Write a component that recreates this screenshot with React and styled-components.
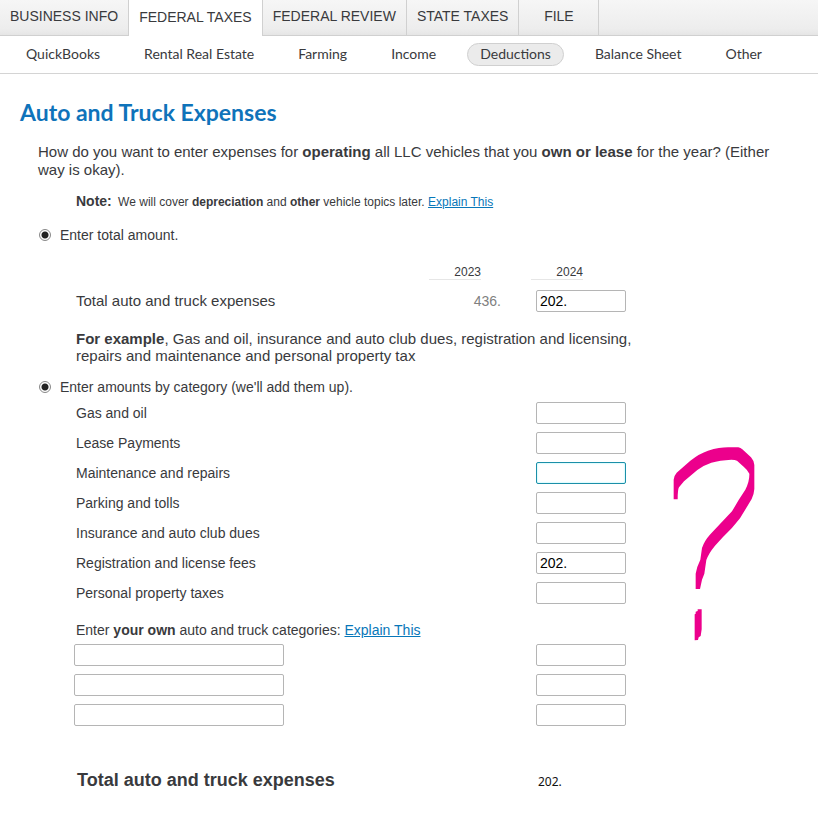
import React, { useState } from "react";
import styled, { createGlobalStyle } from "styled-components";

const GlobalStyle = createGlobalStyle`
  *, *::before, *::after {
    box-sizing: border-box;
  }

  body {
    margin: 0;
    background: #fff;
    color: #393a3d;
    font: 14px/18px "Liberation Sans", Arial, sans-serif;
  }
`;

const Tabs = styled.nav`
  display: flex;
  height: 36px;
  background: linear-gradient(#f6f6f6, #ededed 80%, #e4e4e4);
  box-shadow: inset 0 -1px #d0d0d0;
`;

const Tab = styled.a`
  display: flex;
  justify-content: center;
  min-width: 80px;
  padding: ${(props) => (props.$active ? "8px 10px" : "7px 10px")};
  border-right: 1px solid #d0d0d0;
  background: ${(props) => (props.$active ? "#fff" : "none")};
  color: inherit;
  text-decoration: none;
  white-space: nowrap;
`;

const SubNav = styled.nav`
  display: flex;
  align-items: center;
  gap: 18px;
  height: 38px;
  padding: 0 13px;
  border-bottom: 1px solid #d4d4d4;
`;

const SubNavLink = styled.a`
  padding: 1px 12px 2px;
  border: 1px solid ${(props) => (props.$active ? "#d0d0d0" : "transparent")};
  border-radius: 12px;
  background: ${(props) => (props.$active ? "#ebebeb" : "none")};
  color: inherit;
  font-family: Lato, sans-serif;
  text-decoration: none;
  white-space: nowrap;
`;

const Main = styled.main`
  padding: 24px 20px;
`;

const Title = styled.h1`
  margin: 0;
  color: #0f73ba;
  font: 700 23px/28px Lato, sans-serif;
`;

const Form = styled.form`
  padding: 17px 18px 0;
`;

const Question = styled.p`
  margin: 0;
  font-size: 15px;
`;

const Note = styled.p`
  margin: 13px 0 15px 38px;
  font-size: 12px;
`;

const NoteLabel = styled.strong`
  margin-right: 3px;
  font-size: 14px;
`;

const Link = styled.a`
  color: #0877b9;
`;

const Choice = styled.label`
  display: flex;
  align-items: center;
  gap: 9px;
`;

const Radio = styled.input.attrs({ type: "radio" })`
  appearance: none;
  width: 12px;
  height: 12px;
  margin: 0 0 0 1px;
  border: 1px solid #888;
  border-radius: 50%;

  &:checked {
    background: radial-gradient(circle, #222 3px, #fff 4px);
  }
`;

const Fields = styled.div`
  flex: 0 1 550px;
  max-width: 550px;
`;

const Indent = styled.div`
  display: flex;
  align-items: flex-start;
  padding: 2px 0 0 38px;
`;

const YearTable = styled.table`
  width: 100%;
  margin-top: 20px;
  border-collapse: collapse;

  th,
  td {
    padding: 0;
    font-weight: 400;
    text-align: left;
  }

  label {
    font-size: 15px;
  }
`;

const YearCell = styled.th`
  width: ${(props) => props.$width}px;
  padding-bottom: 10px !important;
`;

const Year = styled.div`
  width: 52px;
  border-bottom: 1px solid #e6e6e6;
  font-size: 12px;
  line-height: 13px;
  text-align: right;
`;

const PriorAmount = styled.div`
  width: 72px;
  color: #808080;
  text-align: right;
`;

const TextInput = styled.input`
  display: block;
  width: ${(props) => props.$width || 90}px;
  height: 22px;
  margin-left: ${(props) => (props.$right ? "auto" : 0)};
  padding: 0 3px;
  border: 1px solid ${(props) => (props.$active ? "#1b8fa8" : "#b5b5b5")};
  border-radius: 2px;
  background: #fff;
  box-shadow: ${(props) => (props.$active ? "inset 0 0 2px #8ef3fa" : "none")};
  color: #000;
  font: inherit;
  outline: none;
`;

const Example = styled.p`
  max-width: 570px;
  margin: 18px -10px 14px 0;
  font-size: 15px;
  line-height: 17px;
`;

const Row = styled.div`
  display: flex;
  align-items: center;
  justify-content: space-between;
  height: 30px;
`;

const OwnText = styled.p`
  margin: 13px 0 1px;
`;

const OwnRow = styled(Row)`
  margin-left: -2px;
`;

const Scribble = styled.svg`
  flex: none;
  width: 82px;
  height: 194px;
  margin: 49px 0 0 47px;
  fill: #ec008c;
`;

const TotalRow = styled.div`
  display: flex;
  align-items: baseline;
  justify-content: space-between;
  max-width: 550px;
  margin: 39px 0 0 38px;
`;

const TotalLabel = styled.h2`
  margin: 0 0 0 1px;
  font-size: 18px;
  line-height: 22px;
`;

const TotalAmount = styled.output`
  width: 88px;
  color: #111;
  font: 12px/18px "Noto Sans", sans-serif;
`;

const tabs = [
  "BUSINESS INFO",
  "FEDERAL TAXES",
  "FEDERAL REVIEW",
  "STATE TAXES",
  "FILE",
];

const sections = [
  "QuickBooks",
  "Rental Real Estate",
  "Farming",
  "Income",
  "Deductions",
  "Balance Sheet",
  "Other",
];

const categories = [
  { id: "gas", label: "Gas and oil" },
  { id: "lease", label: "Lease Payments" },
  { id: "repairs", label: "Maintenance and repairs" },
  { id: "parking", label: "Parking and tolls" },
  { id: "insurance", label: "Insurance and auto club dues" },
  { id: "registration", label: "Registration and license fees", value: "202." },
  { id: "property", label: "Personal property taxes" },
];

export default function App() {
  const [activeField, setActiveField] = useState("repairs");

  return (
    <>
      <GlobalStyle />
      <Tabs>
        {tabs.map((tab) => (
          <Tab key={tab} href="#" $active={tab === "FEDERAL TAXES"}>
            {tab}
          </Tab>
        ))}
      </Tabs>
      <SubNav>
        {sections.map((section) => (
          <SubNavLink key={section} href="#" $active={section === "Deductions"}>
            {section}
          </SubNavLink>
        ))}
      </SubNav>
      <Main>
        <Title>Auto and Truck Expenses</Title>
        <Form>
          <Question>
            How do you want to enter expenses for <b>operating</b> all LLC
            vehicles that you <b>own or lease</b> for the year? (Either way is
            okay).
          </Question>
          <Note>
            <NoteLabel>Note:</NoteLabel> We will cover <b>depreciation</b> and{" "}
            <b>other</b> vehicle topics later. <Link href="#">Explain This</Link>
          </Note>

          <Choice>
            <Radio name="total" defaultChecked />
            Enter total amount.
          </Choice>
          <Indent>
            <Fields>
              <YearTable>
                <thead>
                  <tr>
                    <td />
                    <YearCell $width={102}>
                      <Year>2023</Year>
                    </YearCell>
                    <YearCell $width={95}>
                      <Year>2024</Year>
                    </YearCell>
                  </tr>
                </thead>
                <tbody>
                  <tr>
                    <th>
                      <label htmlFor="total">Total auto and truck expenses</label>
                    </th>
                    <td>
                      <PriorAmount>436.</PriorAmount>
                    </td>
                    <td>
                      <TextInput id="total" defaultValue="202." $right />
                    </td>
                  </tr>
                </tbody>
              </YearTable>
              <Example>
                <b>For example</b>, Gas and oil, insurance and auto club dues,
                registration and licensing, repairs and maintenance and personal
                property tax
              </Example>
            </Fields>
          </Indent>

          <Choice>
            <Radio name="category" defaultChecked />
            Enter amounts by category (we'll add them up).
          </Choice>
          <Indent>
            <Fields>
              {categories.map(({ id, label, value }) => (
                <Row key={id}>
                  <label htmlFor={id}>{label}</label>
                  <TextInput
                    id={id}
                    defaultValue={value}
                    $active={id === activeField}
                    onFocus={() => setActiveField(id)}
                  />
                </Row>
              ))}
              <OwnText>
                Enter <b>your own</b> auto and truck categories:{" "}
                <Link href="#">Explain This</Link>
              </OwnText>
              {[1, 2, 3].map((n) => (
                <OwnRow key={n}>
                  <TextInput aria-label={`Category ${n}`} $width={210} />
                  <TextInput aria-label={`Amount ${n}`} />
                </OwnRow>
              ))}
            </Fields>
            <Scribble viewBox="40 50 246 582" aria-hidden="true">
              <path d="M42 207V148Q43 136 51 127L92 91Q120 69 145 61Q180 51 205 51H236Q243 52 248 57L274 81Q283 91 284 104V176Q283 192 276 206L241 264Q220 292 190 320L166 346Q147 369 140 389L134 430L127 448L121 476H108V430Q111 410 122 388L127 353Q134 332 152 312L217 243L237 209L257 178Q270 153 269 130Q262 117 252 109L232 91Q226 88 215 88Q180 90 155 97Q133 104 113 119L73 153L58 171Q54 178 54 207Z" />
              <path d="M105 630V552L108 550V544L114 542V537H126V597L123 617L117 621L115 629Z" />
            </Scribble>
          </Indent>

          <TotalRow>
            <TotalLabel>Total auto and truck expenses</TotalLabel>
            <TotalAmount>202.</TotalAmount>
          </TotalRow>
        </Form>
      </Main>
    </>
  );
}
